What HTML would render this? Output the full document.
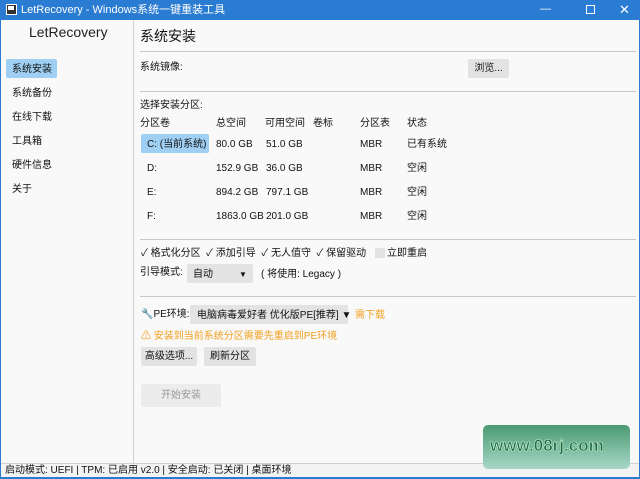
<!DOCTYPE html><html><head><meta charset="utf-8"><style>
*{margin:0;padding:0;box-sizing:border-box}
body{width:640px;height:479px;overflow:hidden;background:#f9f9f9;font-family:"Liberation Sans","Noto Sans CJK SC",sans-serif;font-size:10px;color:#111;position:relative}
.a{position:absolute;white-space:nowrap;line-height:15px}
.btn{position:absolute;background:#e3e3e3;border-radius:2px;text-align:center}
</style></head><body>
<div class="a" style="left:0;top:0;width:640px;height:20px;background:#2a7bd2;border:1px solid #2a7bd2"></div>
<div class="a" style="left:6px;top:4px;width:11px;height:11px;background:#333;border:1px solid #fff"></div>
<div class="a" style="left:8px;top:6px;width:6px;height:4px;background:#fff"></div>
<div class="a" style="left:21px;top:3px;color:#fff;font-size:11px">LetRecovery - Windows系统一键重装工具</div>
<div class="a" style="left:540px;top:2px;color:#fff;font-size:11px">—</div>
<div class="a" style="left:586px;top:5px;width:9px;height:9px;border:1px solid #fff"></div>
<div class="a" style="left:619px;top:2px;color:#fff;font-size:13px">✕</div>
<div class="a" style="left:0;top:20px;width:1px;height:459px;background:#2a7bd2"></div>
<div class="a" style="left:639px;top:20px;width:1px;height:459px;background:#2a7bd2"></div>
<div class="a" style="left:0;top:477px;width:640px;height:2px;background:#2a7bd2"></div>
<div class="a" style="left:1px;top:20px;width:133px;height:443px;background:#f9f9f9;border-right:1px solid #d0d0d0"></div>
<div class="a" style="left:29px;top:24px;font-size:14px;line-height:16px;color:#222">LetRecovery</div>
<div class="a" style="left:6px;top:59px;width:51px;height:19px;background:#9fd0f3;border-radius:2px"></div>
<div class="a" style="left:12px;top:62px">系统安装</div>
<div class="a" style="left:12px;top:86px">系统备份</div>
<div class="a" style="left:12px;top:110px">在线下载</div>
<div class="a" style="left:12px;top:134px">工具箱</div>
<div class="a" style="left:12px;top:158px">硬件信息</div>
<div class="a" style="left:12px;top:182px">关于</div>
<div class="a" style="left:140px;top:28px;font-size:14px;line-height:16px">系统安装</div>
<div class="a" style="left:140px;top:51px;width:496px;height:1px;background:#c8c8c8"></div>
<div class="a" style="left:140px;top:60px">系统镜像:</div>
<div class="btn" style="left:468px;top:59px;width:41px;height:19px;line-height:19px">浏览...</div>
<div class="a" style="left:140px;top:91px;width:496px;height:1px;background:#c8c8c8"></div>
<div class="a" style="left:140px;top:98px">选择安装分区:</div>
<div class="a" style="left:140px;top:116px">分区卷</div><div class="a" style="left:216px;top:116px">总空间</div><div class="a" style="left:265px;top:116px">可用空间</div><div class="a" style="left:313px;top:116px">卷标</div><div class="a" style="left:360px;top:116px">分区表</div><div class="a" style="left:407px;top:116px">状态</div>
<div class="a" style="left:141px;top:134px;width:68px;height:19px;background:#9fd0f3;border-radius:2px"></div>
<div class="a" style="left:147px;top:137px">C: (当前系统)</div><div class="a" style="left:216px;top:137px">80.0 GB</div><div class="a" style="left:266px;top:137px">51.0 GB</div><div class="a" style="left:360px;top:137px">MBR</div><div class="a" style="left:407px;top:137px">已有系统</div>
<div class="a" style="left:147px;top:161px">D:</div><div class="a" style="left:216px;top:161px">152.9 GB</div><div class="a" style="left:266px;top:161px">36.0 GB</div><div class="a" style="left:360px;top:161px">MBR</div><div class="a" style="left:407px;top:161px">空闲</div>
<div class="a" style="left:147px;top:185px">E:</div><div class="a" style="left:216px;top:185px">894.2 GB</div><div class="a" style="left:266px;top:185px">797.1 GB</div><div class="a" style="left:360px;top:185px">MBR</div><div class="a" style="left:407px;top:185px">空闲</div>
<div class="a" style="left:147px;top:209px">F:</div><div class="a" style="left:216px;top:209px">1863.0 GB</div><div class="a" style="left:266px;top:209px">201.0 GB</div><div class="a" style="left:360px;top:209px">MBR</div><div class="a" style="left:407px;top:209px">空闲</div>
<div class="a" style="left:140px;top:239px;width:496px;height:1px;background:#c8c8c8"></div>
<div class="a" style="left:141px;top:246px">✓ 格式化分区 &nbsp;✓ 添加引导 &nbsp;✓ 无人值守 &nbsp;✓ 保留驱动</div>
<div class="a" style="left:375px;top:248px;width:10px;height:10px;background:#e3e3e3"></div>
<div class="a" style="left:387px;top:246px">立即重启</div>
<div class="a" style="left:140px;top:265px">引导模式:</div>
<div class="btn" style="left:187px;top:264px;width:66px;height:19px"></div>
<div class="a" style="left:193px;top:267px">自动</div><div class="a" style="left:239px;top:267px;font-size:8px">▼</div>
<div class="a" style="left:261px;top:267px">( 将使用: Legacy )</div>
<div class="a" style="left:140px;top:296px;width:496px;height:1px;background:#c8c8c8"></div>
<div class="a" style="left:141px;top:307px">🔧PE环境:</div>
<div class="btn" style="left:190px;top:305px;width:158px;height:19px"></div>
<div class="a" style="left:197px;top:308px">电脑病毒爱好者 优化版PE[推荐] ▼</div>
<div class="a" style="left:355px;top:308px;color:#f0a020">需下载</div>
<div class="a" style="left:141px;top:329px;color:#f0a020">⚠ 安装到当前系统分区需要先重启到PE环境</div>
<div class="btn" style="left:141px;top:347px;width:56px;height:19px;line-height:19px">高级选项...</div>
<div class="btn" style="left:204px;top:347px;width:52px;height:19px;line-height:19px">刷新分区</div>
<div class="btn" style="left:141px;top:384px;width:80px;height:23px;line-height:23px;background:#ececec;color:#999">开始安装</div>
<div class="a" style="left:1px;top:463px;width:638px;height:14px;background:#f3f3f3;border-top:1px solid #d0d0d0"></div>
<div class="a" style="left:5px;top:463px">启动模式: UEFI | TPM: 已启用 v2.0 | 安全启动: 已关闭 | 桌面环境</div>
<div class="a" style="left:483px;top:425px;width:147px;height:44px;border-radius:5px;background:linear-gradient(#4a9a72,#a8d8c8)"></div>
<div class="a" style="left:490px;top:436px;font-size:17px;line-height:20px;font-weight:bold;color:#1d6a40;-webkit-text-stroke:0.6px #c8f0d8">www.08rj.com</div>
</body></html>
